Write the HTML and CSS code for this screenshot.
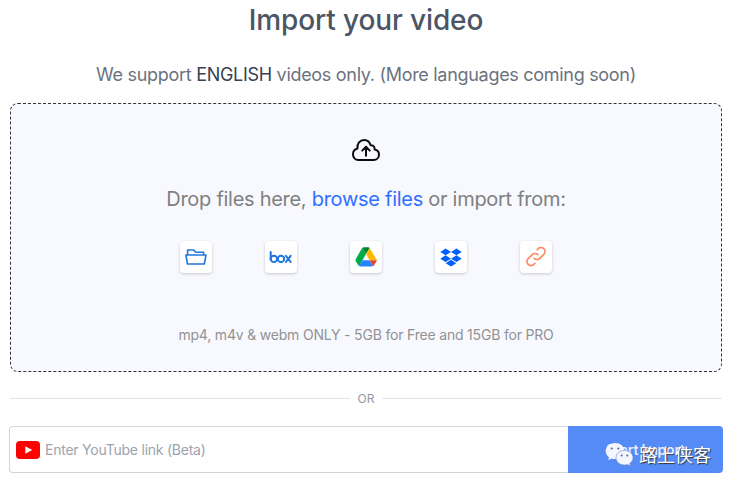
FILE: index.html
```html
<!DOCTYPE html>
<html lang="en">
<head>
<meta charset="utf-8">
<title>Import your video</title>
<link rel="stylesheet" href="styles.css">
</head>
<body>
<main class="page">
  <h1 class="title">Import your video</h1>
  <p class="subtitle">We support <span class="lang">ENGLISH</span> videos only. (More languages coming soon)</p>
  <section class="dropzone">
    <svg class="cloud" viewBox="0 0 30 24" fill="none" stroke="#0b0b0f" stroke-width="2" stroke-linecap="round" stroke-linejoin="round">
      <path d="M7.3 22H22.5C25.900 22 28 19.500 28 16.700C28 14 26.100 12 23.600 11.600C24 9 22.300 7.100 19.600 7.300C18.700 4.100 16.500 2 13.300 2C8.800 2 5.900 5.500 6.400 10.500C3.700 11.300 2 13.400 2 16.200C2 19.700 4.300 22 7.300 22Z"/>
      <path d="M15 17.800V9.300M11.200 12.600L15 8.800L18.800 12.600"/>
    </svg>
    <p class="prompt">Drop files here, <a class="browse">browse files</a> or import from:</p>
    <div class="sources">
      <div class="source"><svg viewBox="0 0 32 32" fill="none" stroke="#2076dc" stroke-width="1.600" stroke-linejoin="round"><path d="M7.600 14V9H13.600L15.600 11.200H23.600V14"/><path d="M5.900 14H26L24.300 23H7.500Z"/></svg></div>
      <div class="source"><svg viewBox="0 0 32 32" fill="none" stroke="#2076dc" stroke-width="2" stroke-linecap="round"><path d="M5.700 11V18.200"/><circle cx="8.900" cy="17.900" r="3.200"/><circle cx="16" cy="17.900" r="3.200"/><path d="M20.900 14.800L25.700 21M25.700 14.800L20.900 21"/></svg></div>
      <div class="source"><svg viewBox="0 0 32 32"><path fill="#00ac47" d="M12.300 6.900L16 13.100L9 25.200L5.700 20.200Q5.100 19.200 5.700 18.200L11.500 8Q11.800 7.300 12.300 6.900Z"/><path fill="#00832d" d="M12.300 6.900Q12.900 6.300 13.900 6.300H18.100Q19.100 6.300 19.700 6.900L16 13.100Z"/><path fill="#ffba00" d="M19.700 6.900L26.300 18.200Q26.700 18.800 26.700 19.300H19.600L16 13.100Z"/><path fill="#2684fc" d="M12.400 19.300H19.600L23.100 25Q22.500 25.400 21.600 25.400H10.300Q9.500 25.400 9 25Z"/><path fill="#ea4335" d="M19.600 19.300H26.700Q26.700 19.900 26.300 20.600L24.300 23.900Q23.900 24.600 23.100 25Z"/></svg></div>
      <div class="source"><svg viewBox="0 0 32 32" fill="#0061fe"><path d="M10.600 7.500L16 10.900L10.600 14.300L5.300 10.900ZM21.400 7.500L26.700 10.900L21.400 14.300L16 10.900ZM5.300 17.700L10.600 14.300L16 17.700L10.600 21.100ZM21.400 14.300L26.700 17.700L21.400 21.100L16 17.700ZM10.700 22.200L16 18.800L21.300 22.200L16 25.600Z"/></svg></div>
      <div class="source"><svg viewBox="-4 -3.500 32 32" fill="none" stroke="#ff8a62" stroke-width="1.700" stroke-linecap="round" stroke-linejoin="round"><path d="M13.828 10.172a4 4 0 0 0-5.656 0l-4 4a4 4 0 1 0 5.656 5.656l1.102-1.101M10.172 13.828a4 4 0 0 0 5.656 0l4-4a4 4 0 0 0-5.656-5.656l-1.100 1.100"/></svg></div>
    </div>
    <p class="formats">mp4, m4v &amp; webm ONLY - 5GB for Free and 15GB for PRO</p>
  </section>
  <div class="divider"><span>OR</span></div>
  <div class="link-form">
    <div class="link-field">
      <svg class="youtube" viewBox="0 0 24 18"><rect width="24" height="18" rx="4" fill="#f00"/><path d="M9.300 5.200V12.800L16.200 9Z" fill="#fff"/></svg>
      <span>Enter YouTube link (Beta)</span>
    </div>
    <div class="submit">Start Import
      <div class="watermark">
        <svg viewBox="0 0 29 25"><path fill="#f3f6ff" d="M10 1C4.500 1 .7 4.600.7 9C.7 11.600 2 13.700 4 15.200L3.200 18.200L6.500 16.500Q8.200 17.100 10 17.100C15.500 17.100 19.300 13.500 19.300 9S15.500 1 10 1Z"/><path fill="#f3f6ff" stroke="#6b87bd" stroke-width=".6" d="M19.500 8.500C14.500 8.500 11 11.700 11 15.800S14.500 23 19.500 23Q21.100 23 22.500 22.500L25.600 24.200L24.800 21.400C26.800 20.100 28 18.100 28 15.800C28 11.700 24.500 8.500 19.500 8.500Z"/><g fill="#536a9c"><circle cx="6.800" cy="6.500" r="1.100"/><circle cx="13.300" cy="6.500" r="1.100"/><circle cx="16.700" cy="13.500" r="1"/><circle cx="22.300" cy="13.500" r="1"/></g></svg>
        <span>路上侠客</span>
      </div>
    </div>
  </div>
</main>
</body>
</html>
```
FILE: styles.css
```css
* { box-sizing: border-box; }
body { margin: 0; background: #fff; font-family: Inter, "Liberation Sans", sans-serif; }
h1, p { margin: 0; white-space: nowrap; text-align: center; }
.page { width: 735px; height: 487px; padding: 3px 13px 0 10px; overflow: hidden; }
.title { font-size: 28px; line-height: 34px; font-weight: 500; letter-spacing: -.12px; color: #4b5563; }
.subtitle { margin-top: 26px; font-size: 18px; line-height: 24px; letter-spacing: -.3px; color: #6b7280; }
.lang { color: #374151; }
.dropzone { display: flex; flex-direction: column; align-items: center; height: 269px; margin-top: 16px; padding-top: 34px; border: 1px dashed #333; border-radius: 8px; background: #f8f9ff; }
.cloud { display: block; width: 30px; height: 24px; }
.prompt { margin-top: 23px; font-size: 20px; line-height: 28px; letter-spacing: -.28px; color: #808080; }
.browse { color: #2f6fff; }
.sources { display: flex; gap: 53px; margin-top: 28px; }
.source { width: 32px; height: 32px; border-radius: 4px; background: #fff; box-shadow: 0 1px 3px rgba(0,0,0,.2); }
.source svg { display: block; width: 32px; height: 32px; }
.formats { margin-top: 52px; font-size: 14px; line-height: 20px; letter-spacing: -.19px; color: #929292; }
.divider { display: flex; align-items: center; gap: 8px; height: 20px; margin-top: 16px; font-size: 12px; color: #9098a3; }
.divider::before, .divider::after { content: ""; flex: 1; height: 1px; background: #e4e4e4; }
.link-form { display: flex; height: 47px; margin: 18px -1px 0; }
.link-field { display: flex; flex: 1; align-items: center; gap: 5px; padding-left: 6px; border: 1px solid #d1d5db; border-right: 0; border-radius: 4px 0 0 4px; font-size: 14px; letter-spacing: -.24px; color: #9ca3af; }
.youtube { width: 24px; height: 18px; }
.submit { position: relative; width: 155px; border-radius: 0 4px 4px 0; background: #558bf6; color: rgba(255,255,255,.85); font-size: 14px; font-weight: 600; line-height: 47px; letter-spacing: -.2px; text-align: center; }
.watermark { position: absolute; left: 37px; top: 14px; display: flex; align-items: center; gap: 5px; height: 28px; font: 18px/28px "Noto Sans CJK SC", sans-serif; letter-spacing: 0; color: #fff; text-shadow: 1px 1px 1px #333; white-space: nowrap; }
.watermark svg { width: 29px; height: 25px; }
```
